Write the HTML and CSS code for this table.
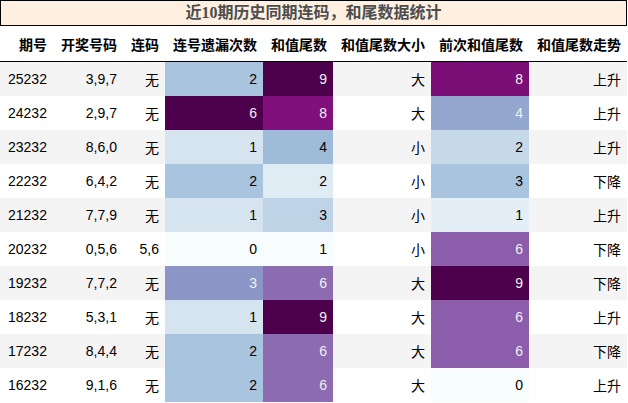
FILE: index.html
```html
<!DOCTYPE html>
<html lang="zh">
<head>
<meta charset="utf-8">
<link rel="stylesheet" href="styles.css">
</head>
<body>
<div class="title">近10期历史同期连码，和尾数据统计</div>
<table class="stats">
<thead>
<tr><th>期号</th><th>开奖号码</th><th>连码</th><th>连号遗漏次数</th><th>和值尾数</th><th>和值尾数大小</th><th>前次和值尾数</th><th>和值尾数走势</th></tr>
</thead>
<tbody>
<tr><td>25232</td><td>3,9,7</td><td>无</td><td class="c2a">2</td><td class="g9 lt">9</td><td>大</td><td class="p8 lt">8</td><td>上升</td></tr>
<tr><td>24232</td><td>2,9,7</td><td>无</td><td class="c6 lt">6</td><td class="g8 lt">8</td><td>大</td><td class="p4 lt">4</td><td>上升</td></tr>
<tr><td>23232</td><td>8,6,0</td><td>无</td><td class="c1">1</td><td class="g4">4</td><td>小</td><td class="p2">2</td><td>上升</td></tr>
<tr><td>22232</td><td>6,4,2</td><td>无</td><td class="c2a">2</td><td class="g2">2</td><td>小</td><td class="p3">3</td><td>下降</td></tr>
<tr><td>21232</td><td>7,7,9</td><td>无</td><td class="c1">1</td><td class="g3">3</td><td>小</td><td class="p1">1</td><td>上升</td></tr>
<tr><td>20232</td><td>0,5,6</td><td>5,6</td><td class="c0">0</td><td class="g1">1</td><td>小</td><td class="p6 lt">6</td><td>下降</td></tr>
<tr><td>19232</td><td>7,7,2</td><td>无</td><td class="c3 lt">3</td><td class="g6 lt">6</td><td>大</td><td class="p9 lt">9</td><td>下降</td></tr>
<tr><td>18232</td><td>5,3,1</td><td>无</td><td class="c1">1</td><td class="g9 lt">9</td><td>大</td><td class="p6 lt">6</td><td>上升</td></tr>
<tr><td>17232</td><td>8,4,4</td><td>无</td><td class="c2a">2</td><td class="g6 lt">6</td><td>大</td><td class="p6 lt">6</td><td>下降</td></tr>
<tr><td>16232</td><td>9,1,6</td><td>无</td><td class="c2a">2</td><td class="g6 lt">6</td><td>大</td><td class="p0">0</td><td>上升</td></tr>
</tbody>
</table>
</body>
</html>
```
FILE: styles.css
```css
html, body {
  margin: 0;
  padding: 0;
  background: #ffffff;
}
body {
  font-family: "Liberation Sans", "Noto Sans CJK SC", sans-serif;
  font-size: 14px;
  color: #000000;
  width: 627px;
}
.title {
  box-sizing: border-box;
  width: 627px;
  height: 26px;
  border: 1px solid #000000;
  background: #fdf0e1;
  color: #4d4d4d;
  font-family: "Liberation Serif", "Noto Sans CJK SC", serif;
  font-weight: bold;
  font-size: 16px;
  line-height: 23px;
  text-align: center;
}
.stats {
  border-collapse: collapse;
  border-spacing: 0;
  width: 627px;
}
.stats th {
  font-weight: bold;
  text-align: right;
  height: 35px;
  padding: 0 6px 0 8px;
  border-bottom: 1px solid #000000;
  white-space: nowrap;
  vertical-align: middle;
}
.stats td {
  text-align: right;
  height: 34px;
  padding: 0 6px 0 8px;
  white-space: nowrap;
  vertical-align: middle;
}
.stats tbody tr:nth-child(odd) {
  background: #f4f4f4;
}
.lt { color: #f1f1f1; }
/* 连号遗漏次数 (0..6) */
.c0 { background: #f7fcfd; }
.c1 { background: #d5e4ef; }
.c2a { background: #a9c4de; }
.c3 { background: #8c96c6; }
.c6 { background: #4d004b; }
/* 和值尾数 (1..9) */
.g1 { background: #f7fcfd; }
.g2 { background: #e0ecf4; }
.g3 { background: #bfd3e6; }
.g4 { background: #9ebcda; }
.g6 { background: #8c6bb1; }
.g8 { background: #810f7c; }
.g9 { background: #4d004b; }
/* 前次和值尾数 (0..9) */
.p0 { background: #f7fcfd; }
.p1 { background: #e3eef5; }
.p2 { background: #c6d9e9; }
.p3 { background: #a9c4de; }
.p4 { background: #94a7cf; }
.p6 { background: #8b5daa; }
.p8 { background: #7b0d77; }
.p9 { background: #4d004b; }
```
